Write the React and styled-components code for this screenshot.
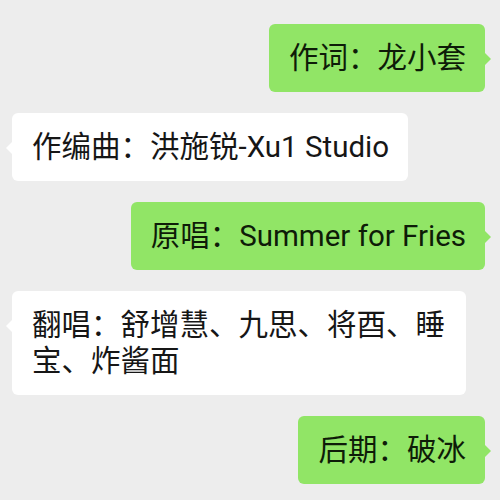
import React from 'react';
import styled, { createGlobalStyle } from 'styled-components';

const GlobalStyle = createGlobalStyle`
    html, body {
        margin: 0;
        padding: 0;
        background: #ededed;
    }
`;

const Chat = styled.div`
    width: 500px;
    height: 500px;
    box-sizing: border-box;
    padding: 24px 15px 0 12px;
    display: flex;
    flex-direction: column;
    gap: 21px;
    background: #ededed;
    overflow: hidden;
    font-family: Roboto, "Noto Sans CJK SC", sans-serif;
`;

const Row = styled.div`
    display: flex;
    justify-content: ${props => (props.mine ? 'flex-end' : 'flex-start')};
`;

const Bubble = styled.div`
    position: relative;
    box-sizing: border-box;
    max-width: 454px;
    padding: 16px 19px 16px 20px;
    border-radius: 6px;
    font-size: 29.5px;
    line-height: 36px;
    color: ${props => (props.mine ? '#0e1c08' : '#161616')};
    background: ${props => (props.mine ? '#91e566' : '#ffffff')};

    &::after {
        content: '';
        position: absolute;
        top: 29px;
        ${props => (props.mine ? 'right: -6px;' : 'left: -6px;')}
        border-top: 6px solid transparent;
        border-bottom: 6px solid transparent;
        ${props => (props.mine
            ? 'border-left: 6px solid #91e566;'
            : 'border-right: 6px solid #ffffff;')}
    }
`;

const messages = [
    { mine: true, text: '作词：龙小套' },
    { mine: false, text: '作编曲：洪施锐-Xu1 Studio' },
    { mine: true, text: '原唱：Summer for Fries' },
    { mine: false, text: '翻唱：舒增慧、九思、将酉、睡宝、炸酱面' },
    { mine: true, text: '后期：破冰' }
];

const App = () => (
    <>
        <GlobalStyle />
        <Chat>
            {messages.map((m, i) => (
                <Row key={i} mine={m.mine}>
                    <Bubble mine={m.mine}>{m.text}</Bubble>
                </Row>
            ))}
        </Chat>
    </>
);

export default App;
